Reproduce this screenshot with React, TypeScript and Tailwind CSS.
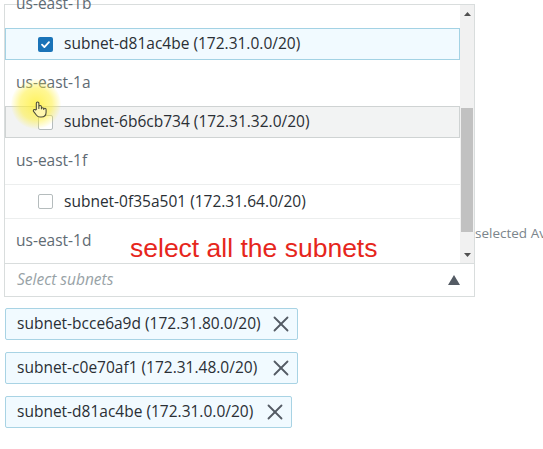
import { X } from 'lucide-react';

type Row =
  | { kind: 'group'; label: string; h: string; extra?: string }
  | { kind: 'option'; label: string; h: string; state: 'selected' | 'hover' | 'plain' };

const rows: Row[] = [
  { kind: 'group', label: 'us-east-1b', h: 'h-[46px]', extra: '-mt-[26px] h-[49px]' },
  { kind: 'option', label: 'subnet-d81ac4be (172.31.0.0/20)', h: 'h-[32px]', state: 'selected' },
  { kind: 'group', label: 'us-east-1a', h: 'h-[46px]' },
  { kind: 'option', label: 'subnet-6b6cb734 (172.31.32.0/20)', h: 'h-[32px]', state: 'hover' },
  { kind: 'group', label: 'us-east-1f', h: 'h-[46px]' },
  { kind: 'option', label: 'subnet-0f35a501 (172.31.64.0/20)', h: 'h-[35px]', state: 'plain' },
  { kind: 'group', label: 'us-east-1d', h: 'h-[44px]' },
];

const tokens = [
  { label: 'subnet-bcce6a9d (172.31.80.0/20)', w: 'w-[293px]' },
  { label: 'subnet-c0e70af1 (172.31.48.0/20)', w: 'w-[293px]' },
  { label: 'subnet-d81ac4be (172.31.0.0/20)', w: 'w-[287px]' },
];

function Checkbox({ checked }: { checked: boolean }) {
  if (checked) {
    return (
      <span className="flex h-[15px] w-[15px] shrink-0 items-center justify-center rounded-[2px] bg-[#1a73b8]">
        <svg width="11" height="11" viewBox="0 0 12 12" fill="none">
          <path d="M2.2 6.2l2.6 2.6 5-5.4" stroke="white" strokeWidth="2" strokeLinecap="round" strokeLinejoin="round" />
        </svg>
      </span>
    );
  }
  return <span className="block h-[15px] w-[15px] shrink-0 rounded-[2px] border border-[#b5bcbd] bg-white" />;
}

export default function App() {
  return (
    <div className="relative h-[449px] w-[543px] overflow-hidden bg-white" style={{ fontFamily: '"Open Sans", "Noto Sans", sans-serif' }}>
      <div className="pl-[4px] pt-[4px]">
        <div className="flex items-end">
          {/* dropdown list */}
          <div className="flex h-[259px] w-[471px] shrink-0 border-x border-t border-[#d9dddd]">
            <div className="w-[455px]">
              {rows.map((r, i) =>
                r.kind === 'group' ? (
                  <div key={i} className={`flex items-center pl-[11px] text-[15.5px] text-[#5f6b73] ${r.h} ${r.extra ?? ''}`}>
                    {r.label}
                  </div>
                ) : (
                  <div
                    key={i}
                    className={`flex items-center gap-[11px] text-[15.5px] text-[#2a2f35] ${r.h} ${
                      r.state === 'selected'
                        ? 'border border-[#a3d2e4] bg-[#f1faff] pl-[32px]'
                        : r.state === 'hover'
                        ? 'border border-[#cfd3d3] bg-[#f2f3f3] pl-[32px]'
                        : 'border-y border-[#eceeee] pl-[33px]'
                    }`}
                  >
                    <Checkbox checked={r.state === 'selected'} />
                    <span className="whitespace-nowrap">{r.label}</span>
                  </div>
                )
              )}
            </div>
            {/* scrollbar */}
            <div className="flex w-[14px] flex-col bg-[#f1f1f1]">
              <div className="flex h-[17px] items-center justify-center">
                <svg width="7" height="4" viewBox="0 0 7 4"><path d="M3.5 0L7 4H0z" fill="#505050" /></svg>
              </div>
              <div className="flex-1 px-[1px] pt-[86px]">
                <div className="h-[124px] bg-[#c1c1c1]" />
              </div>
              <div className="flex h-[17px] items-center justify-center">
                <svg width="7" height="4" viewBox="0 0 7 4"><path d="M0 0h7L3.5 4z" fill="#505050" /></svg>
              </div>
            </div>
          </div>
          <div className="mb-[20px] whitespace-nowrap text-[13.5px] text-[#7b858c]">selected Av</div>
        </div>

        {/* input */}
        <div className="flex h-[34px] w-[471px] items-center justify-between border border-[#d9dddd] pl-[12px] pr-[14px]">
          <span className="text-[15.5px] italic text-[#98a2a6]">Select subnets</span>
          <svg width="12" height="10" viewBox="0 0 12 10"><path d="M6 0l6 10H0z" fill="#545b64" /></svg>
        </div>

        {/* tokens */}
        <div className="mt-[11px] flex flex-col gap-[12px] pl-[1px]">
          {tokens.map((t) => (
            <div key={t.label} className={`flex h-[32px] items-center justify-between rounded-[2px] border border-[#a8d3e4] bg-[#f1faff] pl-[11px] pr-[3px] ${t.w}`}>
              <span className="whitespace-nowrap text-[15.5px] text-[#2a2f35]">{t.label}</span>
              <X size={26} strokeWidth={1.7} className="text-[#545b64]" />
            </div>
          ))}
        </div>
      </div>

      {/* video annotation + cursor overlay */}
      <div className="pointer-events-none absolute left-[130px] top-[229px] text-[26.5px] text-[#e6261c]" style={{ fontFamily: '"Liberation Sans", Arial, sans-serif' }}>
        select all the subnets
      </div>
      <div className="pointer-events-none absolute left-[11px] top-[79px] h-[50px] w-[50px] rounded-full bg-[radial-gradient(circle,rgba(255,238,40,0.75)_0%,rgba(255,240,60,0.55)_45%,rgba(255,245,120,0)_72%)]" />
      <svg className="pointer-events-none absolute left-[32px] top-[101px]" width="15" height="17" viewBox="0 0 14 16" fill="none">
        <path
          d="M4 8V2.2a1.2 1.2 0 0 1 2.4 0V7l0-1.6a1.2 1.2 0 0 1 2.4 0V7.4a1.1 1.1 0 0 1 2.2 0V8a1.1 1.1 0 0 1 2.2 0v2.6c0 2.6-1.8 4.4-4.4 4.4H7.4c-1.4 0-2.4-.6-3.2-1.6L1.4 9.8a1.1 1.1 0 0 1 1.8-1.3z"
          fill="#fff7b0"
          stroke="#4a4a3a"
          strokeWidth="1"
          strokeLinejoin="round"
        />
      </svg>
    </div>
  );
}
